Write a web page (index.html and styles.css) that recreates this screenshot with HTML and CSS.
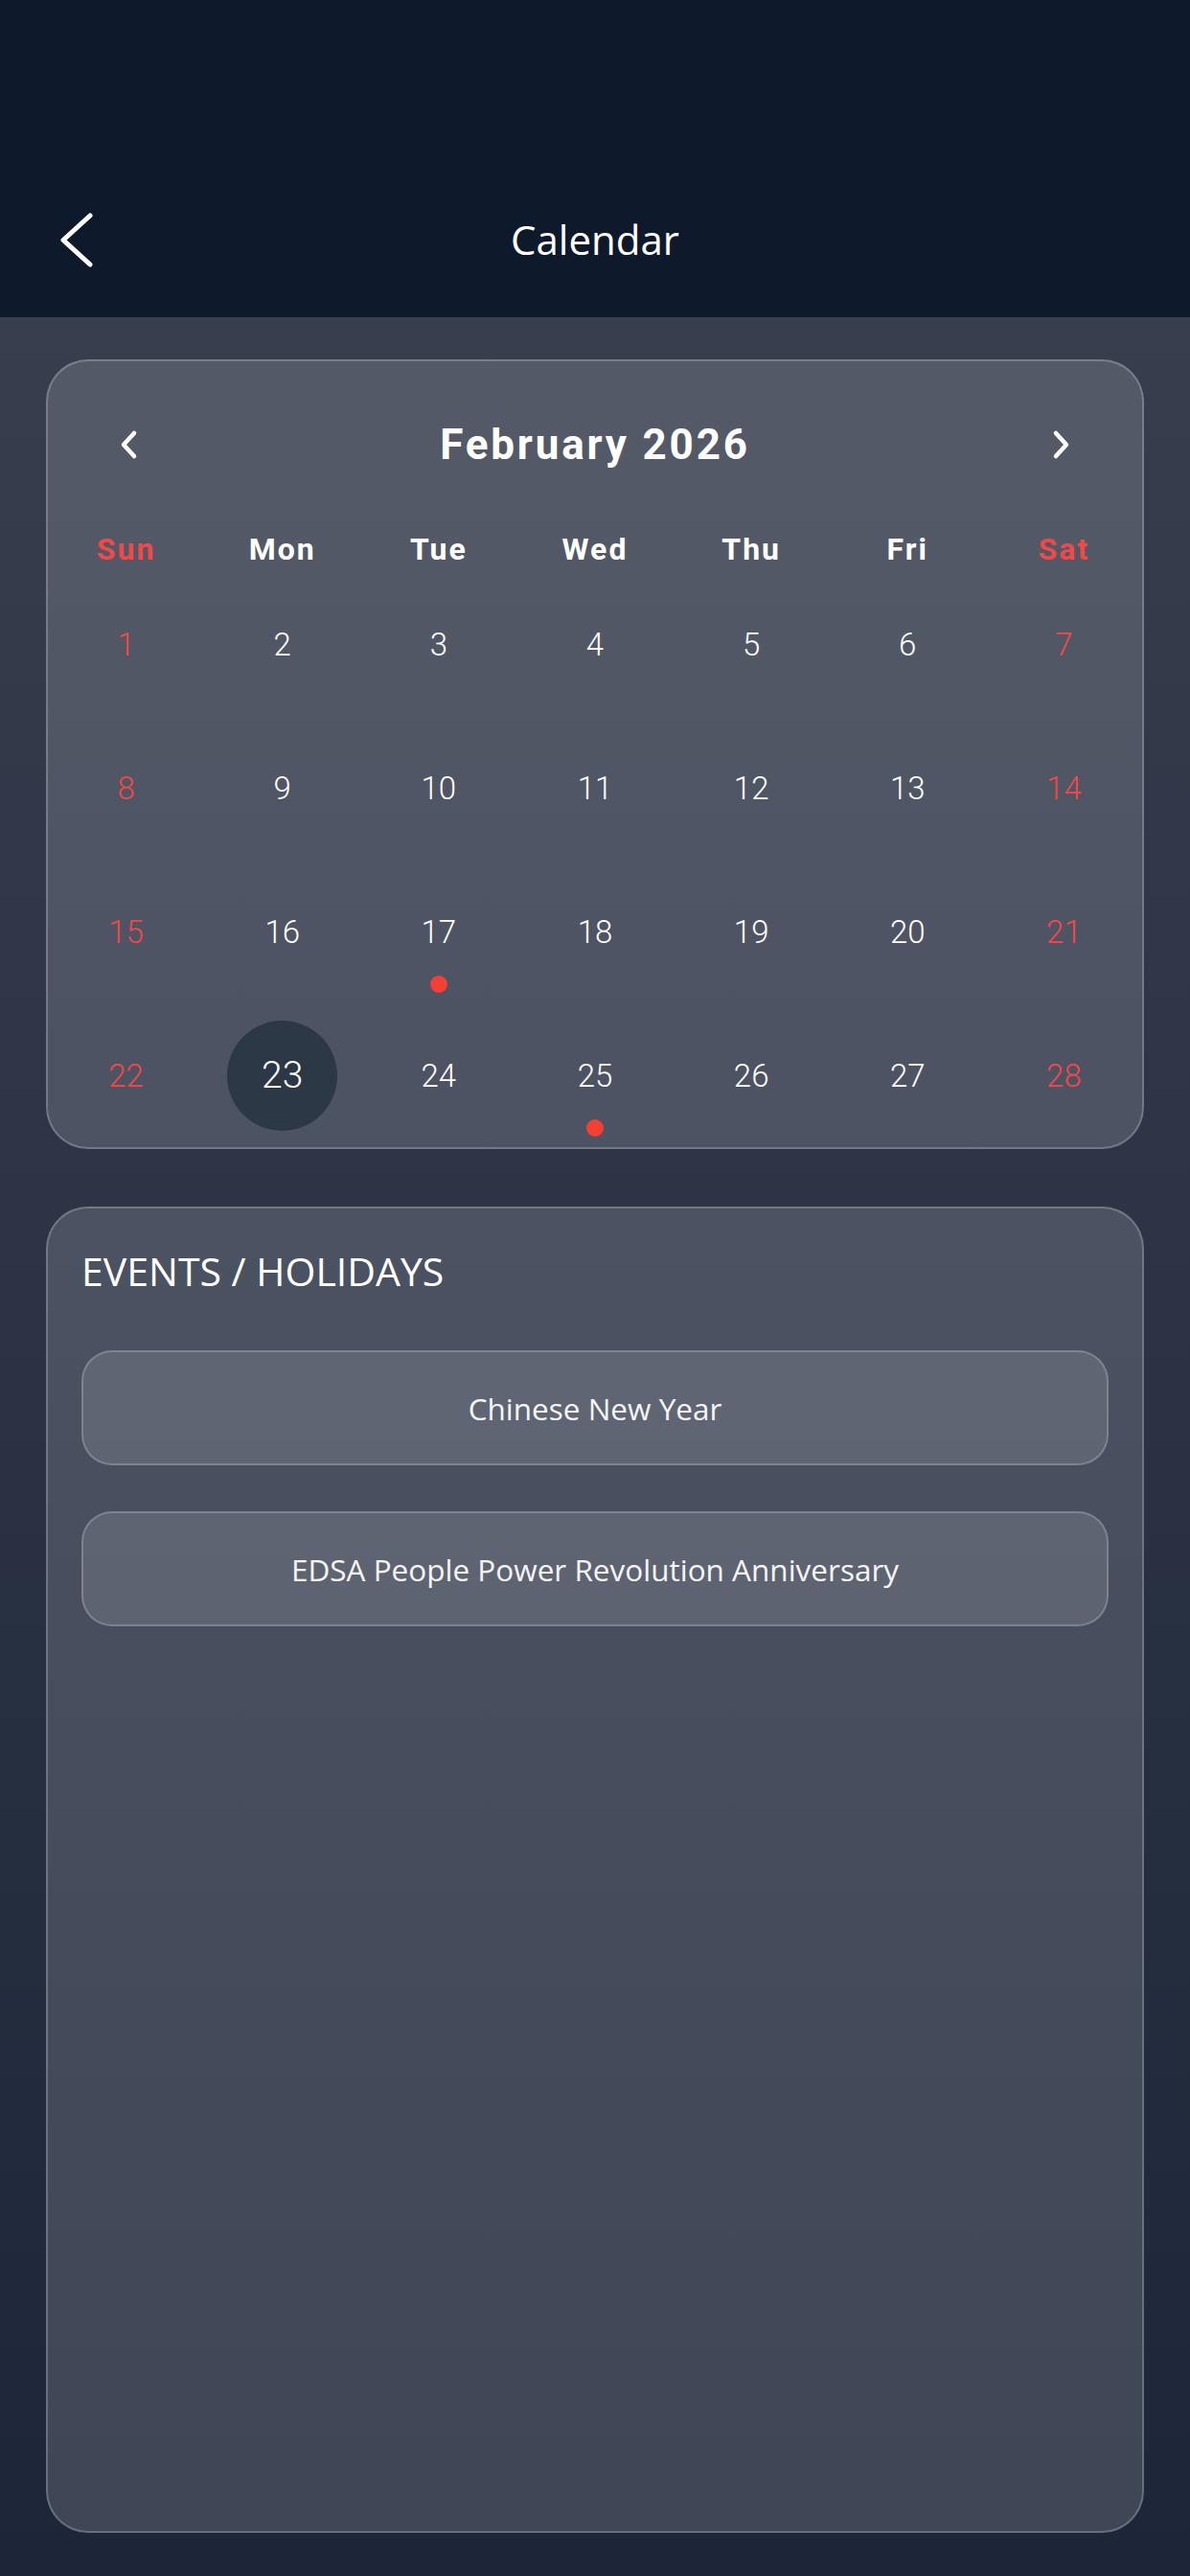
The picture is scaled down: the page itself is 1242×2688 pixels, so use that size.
FILE: index.html
```html
<!DOCTYPE html>
<html lang="en">
<head>
<meta charset="utf-8">
<title>Calendar</title>
<link rel="stylesheet" href="styles.css">
</head>
<body>
<div class="app">
  <header class="topbar">
    <button class="back" aria-label="Back">
      <svg class="back-icon" viewBox="0 0 40 60" width="40" height="60"><path d="M34 5 L6 30.5 L34 56" fill="none" stroke="#ffffff" stroke-width="5" stroke-linecap="round" stroke-linejoin="round"/></svg>
    </button>
    <h1 class="title">Calendar</h1>
    <span class="spacer"></span>
  </header>
  <main class="content">
    <section class="card calendar">
      <div class="month-nav">
        <svg class="chev" viewBox="0 0 24 32" width="24" height="32"><path d="M18 4 L7 16 L18 28" fill="none" stroke="#ffffff" stroke-width="4.5" stroke-linecap="round" stroke-linejoin="round"/></svg>
        <h2 class="month">February 2026</h2>
        <svg class="chev" viewBox="0 0 24 32" width="24" height="32"><path d="M6 4 L17 16 L6 28" fill="none" stroke="#ffffff" stroke-width="4.5" stroke-linecap="round" stroke-linejoin="round"/></svg>
      </div>
      <div class="weekdays">
        <span class="wd weekend">Sun</span>
        <span class="wd">Mon</span>
        <span class="wd">Tue</span>
        <span class="wd">Wed</span>
        <span class="wd">Thu</span>
        <span class="wd">Fri</span>
        <span class="wd weekend">Sat</span>
      </div>
      <div class="days">
        <div class="day weekend"><span class="num">1</span></div>
        <div class="day"><span class="num">2</span></div>
        <div class="day"><span class="num">3</span></div>
        <div class="day"><span class="num">4</span></div>
        <div class="day"><span class="num">5</span></div>
        <div class="day"><span class="num">6</span></div>
        <div class="day weekend"><span class="num">7</span></div>

        <div class="day weekend"><span class="num">8</span></div>
        <div class="day"><span class="num">9</span></div>
        <div class="day"><span class="num">10</span></div>
        <div class="day"><span class="num">11</span></div>
        <div class="day"><span class="num">12</span></div>
        <div class="day"><span class="num">13</span></div>
        <div class="day weekend"><span class="num">14</span></div>

        <div class="day weekend"><span class="num">15</span></div>
        <div class="day"><span class="num">16</span></div>
        <div class="day has-event"><span class="num">17</span><span class="dot"></span></div>
        <div class="day"><span class="num">18</span></div>
        <div class="day"><span class="num">19</span></div>
        <div class="day"><span class="num">20</span></div>
        <div class="day weekend"><span class="num">21</span></div>

        <div class="day weekend"><span class="num">22</span></div>
        <div class="day selected"><span class="num">23</span></div>
        <div class="day"><span class="num">24</span></div>
        <div class="day has-event"><span class="num">25</span><span class="dot"></span></div>
        <div class="day"><span class="num">26</span></div>
        <div class="day"><span class="num">27</span></div>
        <div class="day weekend"><span class="num">28</span></div>
      </div>
    </section>

    <section class="card events">
      <h2 class="events-title">EVENTS / HOLIDAYS</h2>
      <div class="event">Chinese New Year</div>
      <div class="event">EDSA People Power Revolution Anniversary</div>
    </section>
  </main>
</div>
</body>
</html>
```

FILE: styles.css
```css
* {
  box-sizing: border-box;
}

html, body {
  margin: 0;
  padding: 0;
}

body {
  width: 1242px;
  height: 2688px;
  background: #1d2638;
  font-family: "Open Sans", "Noto Sans", sans-serif;
  color: #ffffff;
}

.app {
  display: flex;
  flex-direction: column;
  height: 2688px;
}

.topbar {
  height: 331px;
  flex: 0 0 331px;
  background: #0e1a2b;
  display: grid;
  grid-template-columns: 1fr auto 1fr;
  align-items: center;
  padding: 200px 60px 31px;
}

.back {
  justify-self: start;
  background: none;
  border: 0;
  padding: 0;
  margin: 0;
  width: 40px;
  height: 60px;
  display: flex;
}

.back-icon {
  display: block;
}

.title {
  margin: 0;
  font-family: "Open Sans", "Noto Sans", sans-serif;
  font-weight: 400;
  font-size: 42px;
  line-height: 100px;
  color: #ffffff;
}

.content {
  flex: 1;
  display: flex;
  flex-direction: column;
  gap: 60px;
  padding: 44px 48px 45px;
  background: linear-gradient(180deg, #373e4d 0%, #2c3446 40%, #1d2638 100%);
}

.card {
  border: 2px solid rgba(255, 255, 255, 0.22);
  border-radius: 44px;
  background: rgba(255, 255, 255, 0.15);
}

.calendar {
  padding-top: 42px;
  flex: 0 0 auto;
}

.month-nav {
  height: 90px;
  display: flex;
  align-items: center;
  justify-content: space-between;
  padding: 0 72px;
}

.chev {
  display: block;
}

.month {
  margin: 0;
  font-family: Roboto, "Liberation Sans", sans-serif;
  font-weight: 700;
  font-size: 44px;
  letter-spacing: 2.8px;
  color: #ffffff;
}

.weekdays {
  margin-top: 40px;
  height: 48px;
  display: grid;
  grid-template-columns: repeat(7, 1fr);
  align-items: center;
}

.wd {
  text-align: center;
  font-family: Roboto, "Liberation Sans", sans-serif;
  font-weight: 700;
  font-size: 32px;
  letter-spacing: 2px;
  color: #ffffff;
}

.wd.weekend {
  color: #f24848;
}

.days {
  display: grid;
  grid-template-columns: repeat(7, 1fr);
  grid-auto-rows: 150px;
}

.day {
  position: relative;
  display: flex;
  align-items: center;
  justify-content: center;
  font-family: Roboto, "Liberation Sans", sans-serif;
  font-weight: 300;
  font-size: 33px;
  color: #ffffff;
}

.day.weekend {
  color: #f24848;
}

.num {
  display: inline-flex;
  align-items: center;
  justify-content: center;
  line-height: 1;
}

.selected .num {
  width: 115px;
  height: 115px;
  border-radius: 50%;
  background: #2d3847;
  font-size: 39px;
  font-weight: 300;
}

.dot {
  position: absolute;
  left: 50%;
  top: 121px;
  width: 18px;
  height: 18px;
  margin-left: -9px;
  border-radius: 50%;
  background: #f43f35;
}

.events {
  flex: 1;
  display: flex;
  flex-direction: column;
  gap: 48px;
  padding: 41px 35px;
}

.events-title {
  margin: 0 0 11px;
  font-family: "Open Sans", "Noto Sans", sans-serif;
  font-weight: 400;
  font-size: 41px;
  line-height: 48px;
  color: #ffffff;
}

.event {
  height: 120px;
  display: flex;
  align-items: center;
  justify-content: center;
  border: 2px solid rgba(255, 255, 255, 0.2);
  border-radius: 32px;
  background: rgba(255, 255, 255, 0.12);
  font-family: "Open Sans", "Noto Sans", sans-serif;
  font-size: 31.5px;
  color: #f4f5f7;
}
```
